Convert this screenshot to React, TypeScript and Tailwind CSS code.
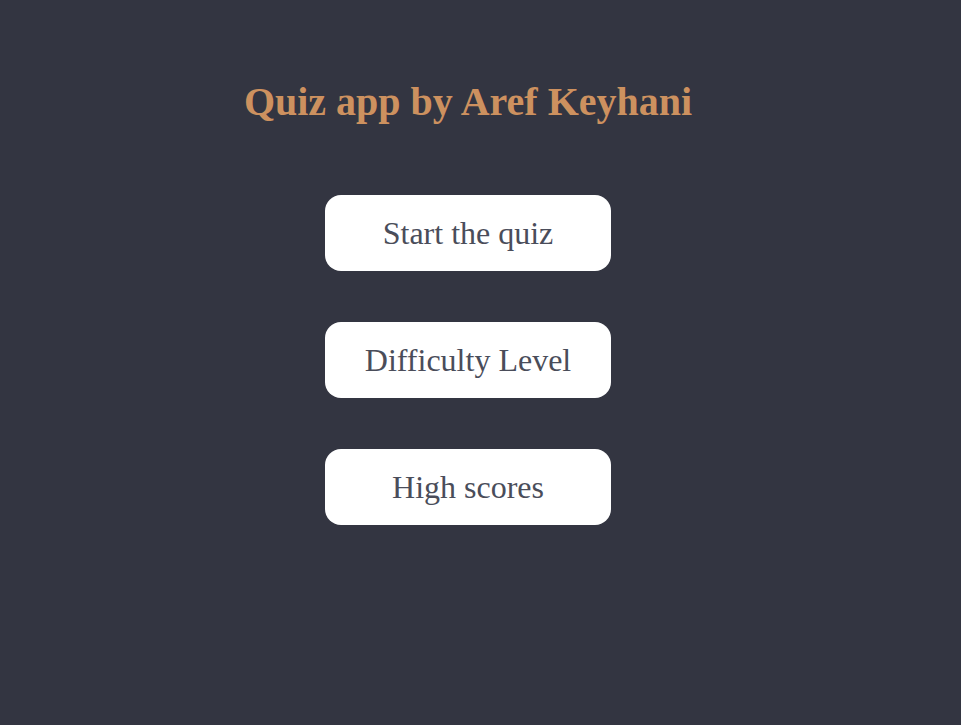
export default function App() {
  const items = ["Start the quiz", "Difficulty Level", "High scores"];
  return (
    <div className="min-h-[725px] w-full bg-[#333541] flex flex-col items-center pr-[25px] pt-[78px]" style={{ fontFamily: '"Liberation Serif", "Times New Roman", serif' }}>
      <h1 className="text-[40px] font-bold text-[#cd915f] leading-[48px]">Quiz app by Aref Keyhani</h1>
      <div className="mt-[69px] flex flex-col gap-[51px]">
        {items.map((t) => (
          <button key={t} className="w-[286px] h-[76px] bg-white rounded-[16px] text-[32px] leading-none text-[#4a4d5a]">
            {t}
          </button>
        ))}
      </div>
    </div>
  );
}
